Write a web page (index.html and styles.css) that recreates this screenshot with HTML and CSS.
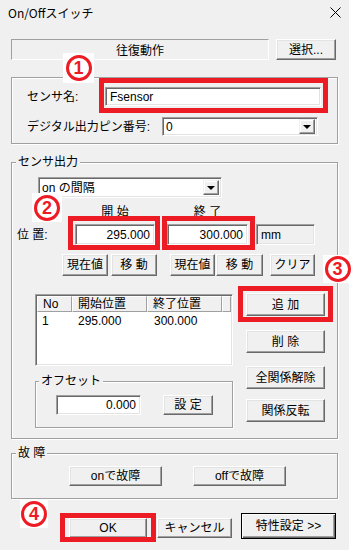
FILE: index.html
```html
<!DOCTYPE html>
<html>
<head>
  <meta charset="utf-8">
  <title>On/Offスイッチ</title>
  <link rel="stylesheet" href="styles.css">
</head>
<body>
  <div class="window">
    <div class="titlebar">
      <span class="title">On/Offスイッチ</span>
      <svg class="close" width="11" height="11" viewBox="0 0 11 11"><path d="M0.5 0.5L10.5 10.5M10.5 0.5L0.5 10.5" stroke="#000" stroke-width="1" fill="none"/></svg>
    </div>

    <div class="content">
      <div class="top-row">
        <div class="static">往復動作</div>
        <button class="btn btn-select">選択...</button>
      </div>

      <div class="group group-sensor">
        <div class="row">
          <span class="label label-name">センサ名:</span>
          <span class="mark mark-name"><input class="field field-name" type="text" value="Fsensor"></span>
        </div>
        <div class="row row-pin">
          <span class="label label-pin">デジタル出力ピン番号:</span>
          <div class="combo combo-pin"><span class="combo-text">0</span><span class="combo-btn"><i></i></span></div>
        </div>
      </div>

      <div class="group group-output">
        <span class="group-title">センサ出力</span>
        <div class="combo combo-mode"><span class="combo-text">on の間隔</span><span class="combo-btn"><i></i></span></div>

        <div class="pos-head">
          <span class="col-start">開 始</span>
          <span class="col-end">終 了</span>
        </div>
        <div class="pos-row">
          <span class="label label-pos">位 置:</span>
          <span class="mark mark-start"><input class="field field-num field-start" type="text" value="295.000"></span>
          <span class="mark mark-end"><input class="field field-num field-end" type="text" value="300.000"></span>
          <input class="field field-unit" type="text" value="mm" readonly>
        </div>

        <div class="pos-buttons">
          <button class="btn b1">現在値</button>
          <button class="btn b2">移 動</button>
          <button class="btn b3">現在値</button>
          <button class="btn b4">移 動</button>
          <button class="btn b5">クリア</button>
        </div>

        <div class="list-area">
          <div class="list-col">
            <div class="list">
              <div class="list-head">
                <span class="h-no">No</span>
                <span class="h-start">開始位置</span>
                <span class="h-end">終了位置</span>
                <span class="h-rest"></span>
              </div>
              <div class="list-row">
                <span class="c-no">1</span>
                <span class="c-start">295.000</span>
                <span class="c-end">300.000</span>
              </div>
            </div>

            <div class="group group-offset">
              <span class="group-title">オフセット</span>
              <input class="field field-num field-offset" type="text" value="0.000">
              <button class="btn btn-set">設 定</button>
            </div>
          </div>

          <div class="side-buttons">
            <span class="mark mark-add"><button class="btn btn-side">追 加</button></span>
            <button class="btn btn-side btn-del">削 除</button>
            <button class="btn btn-side btn-unlink">全関係解除</button>
            <button class="btn btn-side btn-flip">関係反転</button>
          </div>
        </div>
      </div>

      <div class="group group-fault">
        <span class="group-title">故 障</span>
        <button class="btn btn-fault">onで故障</button>
        <button class="btn btn-fault btn-fault-off">offで故障</button>
      </div>

      <div class="bottom-row">
        <span class="mark mark-ok"><button class="btn btn-ok">OK</button></span>
        <button class="btn btn-cancel">キャンセル</button>
        <button class="btn btn-more">特性設定 &gt;&gt;</button>
      </div>
    </div>

    <span class="badge badge-1"><span class="num">1</span></span>
    <span class="badge badge-2"><span class="num">2</span></span>
    <span class="badge badge-3"><span class="num">3</span></span>
    <span class="badge badge-4"><span class="num">4</span></span>
  </div>
</body>
</html>
```

FILE: styles.css
```css
* {
    box-sizing: border-box;
}
body {
    margin: 0;
    background: #fff;
    font-family: "Liberation Sans", "Noto Sans CJK JP", sans-serif;
    font-size: 12px;
    color: #000;
}
.window {
    position: relative;
    width: 349px;
    height: 550px;
    background: #f0f0f0;
}
.titlebar {
    display: flex;
    align-items: center;
    justify-content: space-between;
    height: 27px;
    padding: 0 8px 2px 8px;
    font-family: "Noto Sans CJK JP", sans-serif;
    font-size: 12px;
}
.content {
    padding: 0 11px;
}

/* common controls */
.btn {
    font: inherit;
    color: #000;
    padding: 0;
    line-height: 14px;
    background: #f0f0f0;
    border: 1px solid;
    border-color: #fff #696969 #696969 #fff;
    box-shadow: inset -1px -1px 0 #a0a0a0, inset 1px 1px 0 #e3e3e3;
    white-space: nowrap;
}
.field {
    font: inherit;
    color: #000;
    background: #fff;
    padding: 0 4px;
    border: 1px solid;
    border-color: #a0a0a0 #fff #fff #a0a0a0;
    box-shadow: inset 1px 1px 0 #696969, inset -1px -1px 0 #e3e3e3;
    outline: none;
}
.field-num {
    text-align: right;
}
.label {
    line-height: 14px;
    white-space: nowrap;
}
.group {
    position: relative;
    border: 1px solid #a0a0a0;
    box-shadow: inset 1px 1px 0 #fff, 1px 1px 0 #fff;
}
.group-title {
    position: absolute;
    top: -8px;
    left: 4px;
    padding: 0 2px;
    line-height: 14px;
    background: #f0f0f0;
}
.combo {
    display: flex;
    align-items: center;
    background: #fff;
    border: 1px solid;
    border-color: #a0a0a0 #fff #fff #a0a0a0;
    box-shadow: inset 1px 1px 0 #696969, inset -1px -1px 0 #e3e3e3;
    padding: 2px 2px 2px 3px;
}
.combo-text {
    flex: 1;
    line-height: 14px;
}
.combo-btn {
    display: flex;
    align-items: center;
    justify-content: center;
    width: 16px;
    height: 100%;
    background: #f0f0f0;
    border: 1px solid;
    border-color: #f0f0f0 #696969 #696969 #f0f0f0;
    box-shadow: inset -1px -1px 0 #a0a0a0, inset 1px 1px 0 #fff;
}
.combo-btn i {
    width: 0;
    height: 0;
    border-left: 4px solid transparent;
    border-right: 4px solid transparent;
    border-top: 4px solid #000;
}

/* red callout boxes */
.mark {
    position: relative;
    display: inline-flex;
}
.mark::after {
    content: "";
    position: absolute;
    border: 5px solid #ed1c24;
    pointer-events: none;
}
.mark-name::after { inset: -9px -7px -7px -6px; }
.mark-start::after { inset: -8px -5px -5px -7px; }
.mark-end::after { inset: -8px -7px -5px -5px; }
.mark-add::after { inset: -7px -8px -6px -8px; }
.mark-ok::after { inset: -5px -9px -4px -9px; }

/* top row */
.top-row {
    display: flex;
    margin-top: 12px;
    height: 21px;
}
.static {
    width: 258px;
    display: flex;
    align-items: center;
    justify-content: center;
    border: 1px solid;
    border-color: #a0a0a0 #fff #fff #a0a0a0;
}
.btn-select {
    width: 60px;
    margin-left: 7px;
}

/* sensor name group */
.group-sensor {
    margin-top: 17px;
    padding: 9px 0 7px 15px;
}
.row {
    display: flex;
    align-items: center;
    height: 19px;
}
.row-pin {
    margin-top: 11px;
}
.label-name {
    width: 78px;
}
.label-pin {
    width: 135px;
}
.field-name {
    width: 216px;
    height: 19px;
}
.combo-pin {
    width: 156px;
    height: 19px;
    padding-top: 1px;
    padding-bottom: 1px;
}

/* sensor output group */
.group-output {
    margin-top: 18px;
    padding: 14px 0 10px 0;
}
.combo-mode {
    width: 184px;
    height: 21px;
    margin-left: 26px;
}
.pos-head {
    display: flex;
    margin-top: 7px;
    padding-left: 63px;
    line-height: 14px;
}
.pos-head span {
    text-align: center;
}
.col-start {
    width: 80px;
}
.col-end {
    width: 81px;
    margin-left: 12px;
}
.pos-row {
    display: flex;
    align-items: center;
    margin-top: 5px;
    padding-left: 5px;
    height: 21px;
}
.label-pos {
    width: 58px;
}
.field-start {
    width: 80px;
    height: 21px;
}
.mark-end {
    margin-left: 12px;
}
.field-end {
    width: 81px;
    height: 21px;
}
.field-unit {
    width: 59px;
    height: 21px;
    margin-left: 8px;
    background: #f0f0f0;
}
.pos-buttons {
    display: flex;
    margin-top: 9px;
    padding-left: 50px;
    height: 22px;
}
.pos-buttons .btn {
    height: 22px;
}
.b1 { width: 46px; }
.b2 { width: 46px; margin-left: 3px; }
.b3 { width: 45px; margin-left: 13px; }
.b4 { width: 47px; margin-left: 1px; }
.b5 { width: 45px; margin-left: 7px; }

/* list + side buttons */
.list-area {
    display: flex;
    margin-top: 17px;
    padding-left: 23px;
}
.list-col {
    width: 198px;
}
.list {
    margin-top: 1px;
    height: 72px;
    background: #fff;
    border: 1px solid;
    border-color: #a0a0a0 #fff #fff #a0a0a0;
    box-shadow: inset 1px 1px 0 #696969, inset -1px -1px 0 #e3e3e3;
    padding: 1px;
}
.list-head {
    display: flex;
    height: 16px;
    line-height: 14px;
}
.list-head span {
    padding-left: 5px;
    background: #f0f0f0;
    border: 1px solid;
    border-color: #fff #a0a0a0 #a0a0a0 #fff;
}
.h-no { width: 35px; }
.h-start { width: 75px; }
.h-end { width: 75px; }
.h-rest { flex: 1; }
.list-row {
    display: flex;
    line-height: 14px;
    margin-top: 2px;
}
.list-row span {
    padding-left: 5px;
}
.c-no { width: 36px; }
.c-start { width: 76px; }

.group-offset {
    margin-top: 15px;
    height: 47px;
    display: flex;
    align-items: flex-start;
    padding: 13px 0 0 20px;
}
.group-offset .group-title {
    left: 3px;
}
.field-offset {
    width: 85px;
    height: 20px;
}
.btn-set {
    width: 50px;
    height: 20px;
    margin-left: 22px;
}
.side-buttons {
    display: flex;
    flex-direction: column;
    margin-left: 13px;
    width: 79px;
}
.btn-side {
    width: 79px;
    height: 23px;
}
.btn-del { margin-top: 14px; }
.btn-unlink { margin-top: 13px; }
.btn-flip { margin-top: 10px; }

/* fault group */
.group-fault {
    margin-top: 14px;
    display: flex;
    padding: 12px 0 12px 57px;
}
.btn-fault {
    width: 93px;
    height: 20px;
}
.btn-fault-off {
    margin-left: 31px;
}

/* dialog buttons */
.bottom-row {
    display: flex;
    align-items: flex-start;
    margin-top: 14px;
    padding-left: 58px;
}
.mark-ok {
    margin-top: 5px;
}
.btn-ok {
    width: 78px;
    height: 20px;
}
.btn-cancel {
    width: 75px;
    height: 20px;
    margin-top: 5px;
    margin-left: 10px;
}
.btn-more {
    width: 95px;
    height: 26px;
    margin-left: 9px;
    border-color: #000;
    box-shadow: inset 1px 1px 0 #fff, inset -1px -1px 0 #696969, inset -2px -2px 0 #a0a0a0;
}

/* numbered callouts */
.badge {
    position: absolute;
    display: flex;
    align-items: center;
    justify-content: center;
    background: #fff;
}
.badge .num {
    display: flex;
    align-items: center;
    justify-content: center;
    width: 26px;
    height: 26px;
    border: 3px solid #ed1c24;
    border-radius: 50%;
    color: #ed1c24;
    font-family: "Liberation Sans", sans-serif;
    font-weight: bold;
    font-size: 18px;
    line-height: 18px;
}
.badge-1 { left: 63px; top: 53px; width: 31px; height: 30px; }
.badge-2 { left: 32px; top: 193px; width: 30px; height: 29px; }
.badge-3 { left: 323px; top: 255px; width: 29px; height: 28px; }
.badge-4 { left: 20px; top: 500px; width: 28px; height: 28px; }
```
